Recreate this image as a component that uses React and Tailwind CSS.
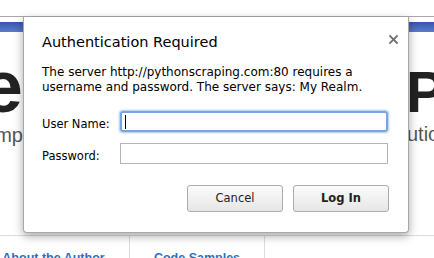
import React from 'react';

const sans = { fontFamily: '"Liberation Sans", Arial, sans-serif' };
const grande = { fontFamily: '"DejaVu Sans", Verdana, sans-serif' };

const CloseIcon = () => (
  <svg width="9" height="9" viewBox="0 0 9 9" className="block">
    <path d="M1 1 L8 8 M8 1 L1 8" stroke="#707070" strokeWidth="1.8" strokeLinecap="square" />
  </svg>
);

const AuthDialog = () => {
  return (
    <div
      className="absolute left-[23px] top-[17px] w-[386px] h-[216px] bg-white border border-t-0 border-[#a8a8a8] rounded-b-[4px] shadow-[0_3px_10px_rgba(0,0,0,0.35)] flex flex-col"
      style={grande}
    >
      <div className="flex justify-between pl-[18px] pr-[10px] pt-[10px]">
        <h2 className="mt-[6px] text-[14.5px] leading-[18px] text-black">Authentication Required</h2>
        <button className="mt-[1px]">
          <CloseIcon />
        </button>
      </div>

      <p className="mt-[14px] pl-[18px] pr-[10px] text-[12px] leading-[15px] text-black whitespace-nowrap">
        The server http://pythonscraping.com:80 requires a
        <br />
        username and password. The server says: My Realm.
      </p>

      <div className="mt-[16px] pl-[18px] flex flex-col gap-[11px]">
        <div className="flex items-start h-[21px]">
          <label className="w-[78px] mt-[7px] text-[11.5px] leading-[13px] text-black">User Name:</label>
          <div className="w-[268px] h-[21px] border-2 border-[#79a6de] rounded-[3px] shadow-[0_0_2px_1px_rgba(110,160,220,0.6)] flex items-center pl-[3px]">
            <span className="block w-px h-[14px] bg-black" />
          </div>
        </div>
        <div className="flex items-start h-[21px]">
          <label className="w-[78px] mt-[7px] text-[11.5px] leading-[13px] text-black">Password:</label>
          <div className="w-[268px] h-[21px] border border-[#b4b4b4] bg-white" />
        </div>
      </div>

      <div className="mt-[21px] pr-[19px] flex justify-end gap-[10px]">
        <button className="w-[96px] h-[27px] rounded-[3px] border border-[#acacac] bg-gradient-to-b from-[#fbfbfb] to-[#e6e6e6] text-[11.5px] leading-none text-[#222]">
          Cancel
        </button>
        <button className="w-[96px] h-[27px] rounded-[3px] border border-[#acacac] bg-gradient-to-b from-[#fbfbfb] to-[#e6e6e6] text-[11.5px] leading-none font-bold text-[#222]">
          Log In
        </button>
      </div>
    </div>
  );
};

export default function App() {
  return (
    <div className="relative w-[434px] h-[258px] overflow-hidden bg-white" style={sans}>
      <div className="h-[17px] border-b border-[#a9a9a9]" />
      <div className="h-[5px]" />
      <div className="h-[10px] bg-gradient-to-b from-[#3855ac] to-[#5d7bca]" />

      <div className="h-[203px] flex justify-between">
        <div className="w-[23px] overflow-hidden flex flex-col items-end">
          <div className="mt-[23px] text-[74px] leading-[64px] font-bold text-[#222] whitespace-nowrap">e</div>
          <div className="mt-[6px] text-[20px] leading-none text-[#555] whitespace-nowrap">Examp</div>
        </div>
        <div className="w-[28px] overflow-hidden flex flex-col items-start">
          <div className="mt-[31px] text-[58px] leading-none font-bold text-[#222] whitespace-nowrap">Python</div>
          <div className="mt-[3px] ml-[1px] text-[20px] leading-none text-[#555] whitespace-nowrap">utions</div>
        </div>
      </div>

      <nav className="border-t border-[#dcdcdc] flex h-[23px]">
        <div className="-ml-[22px] w-[152px] border-r border-[#dcdcdc] pt-[16px] text-center text-[12.5px] leading-none font-bold text-[#2f6fc0] whitespace-nowrap">
          About the Author
        </div>
        <div className="w-[135px] border-r border-[#dcdcdc] pt-[16px] text-center text-[12.5px] leading-none font-bold text-[#2f6fc0] whitespace-nowrap">
          Code Samples
        </div>
      </nav>

      <AuthDialog />
    </div>
  );
}
